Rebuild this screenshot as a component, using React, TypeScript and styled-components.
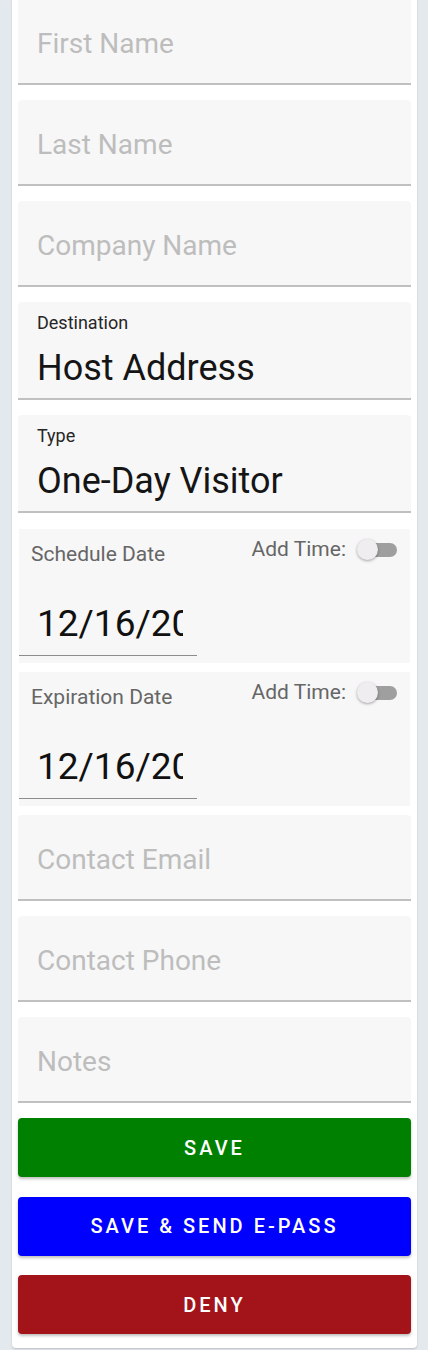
import styled, { createGlobalStyle } from "styled-components";

const GlobalStyle = createGlobalStyle`
  html, body {
    margin: 0;
    padding: 0;
    background: #e4e9ee;
    font-family: Roboto, "Liberation Sans", Arial, sans-serif;
  }
  body {
    min-height: 1350px;
  }
`;

const Card = styled.div`
  width: 405px;
  margin: -1px 0 0 12px;
  padding: 0 6px 14px;
  box-sizing: border-box;
  background: #fff;
  border-radius: 0 0 4px 4px;
  box-shadow: 0 1px 2px rgba(0, 0, 0, 0.18);
  display: flex;
  flex-direction: column;
`;

const FieldBox = styled.div<{ $gap?: number }>`
  background: #f7f7f7;
  border-radius: 4px 4px 0 0;
  border-bottom: 2px solid #c0c0c0;
  padding: 0 19px;
  margin-bottom: ${(p) => (p.$gap ?? 15)}px;
`;

const Placeholder = styled.div`
  padding: 31px 0 25px;
  font-size: 28px;
  line-height: 28px;
  color: #bdbdbd;
  white-space: nowrap;
`;

const LabelText = styled.div`
  padding-top: 12px;
  font-size: 18px;
  line-height: 18px;
  color: #262626;
`;

const ValueText = styled.div`
  margin-top: 18px;
  padding-bottom: 12px;
  font-size: 36px;
  line-height: 36px;
  color: #151515;
  white-space: nowrap;
`;

const DateBlock = styled.div`
  background: #f7f7f7;
  margin: 0 1px 9px;
  height: 134px;
  box-sizing: border-box;
  padding-bottom: 7px;
  display: flex;
  flex-direction: column;
`;

const TopRow = styled.div`
  display: flex;
  justify-content: space-between;
  align-items: flex-start;
  padding: 10px 13px 0 12px;
`;

const DateLabel = styled.div`
  margin-top: 5px;
  font-size: 21px;
  line-height: 21px;
  color: #666;
`;

const TimeToggle = styled.div`
  display: flex;
  align-items: center;
  gap: 11px;
  font-size: 21px;
  line-height: 21px;
  color: #666;
`;

const SwitchWrap = styled.div`
  position: relative;
  width: 40px;
  height: 21px;
`;

const Track = styled.div`
  position: absolute;
  right: 0;
  top: 4px;
  width: 34px;
  height: 14px;
  border-radius: 7px;
  background: #9f9f9f;
`;

const Thumb = styled.div`
  position: absolute;
  left: 0;
  top: 0;
  width: 21px;
  height: 21px;
  border-radius: 50%;
  background: #f0edf0;
  box-shadow: 0 1px 3px rgba(0, 0, 0, 0.35);
`;

const DateInput = styled.div`
  margin-top: 40px;
  width: 178px;
  padding-bottom: 13px;
  border-bottom: 1px solid #8c8c8c;
`;

const DateText = styled.div`
  margin-left: 18px;
  width: 146px;
  overflow: hidden;
  white-space: nowrap;
  font-size: 37px;
  line-height: 37px;
  color: #111;
`;

const Buttons = styled.div`
  display: flex;
  flex-direction: column;
  gap: 19.5px;
`;

const ActionButton = styled.button<{ $bg: string }>`
  height: 59px;
  border: none;
  border-radius: 4px;
  background: ${(p) => p.$bg};
  color: #fff;
  font-family: Roboto, "Liberation Sans", Arial, sans-serif;
  font-weight: 500;
  font-size: 20px;
  letter-spacing: 3px;
  text-transform: uppercase;
  box-shadow: 0 2px 3px rgba(0, 0, 0, 0.25);
  cursor: pointer;
`;

function PlainField({ text, gap }: { text: string; gap?: number }) {
  return (
    <FieldBox $gap={gap}>
      <Placeholder>{text}</Placeholder>
    </FieldBox>
  );
}

function SelectField({ label, value, gap }: { label: string; value: string; gap?: number }) {
  return (
    <FieldBox $gap={gap}>
      <LabelText>{label}</LabelText>
      <ValueText>{value}</ValueText>
    </FieldBox>
  );
}

function DateField({ label }: { label: string }) {
  return (
    <DateBlock>
      <TopRow>
        <DateLabel>{label}</DateLabel>
        <TimeToggle>
          Add Time:
          <SwitchWrap>
            <Track />
            <Thumb />
          </SwitchWrap>
        </TimeToggle>
      </TopRow>
      <DateInput>
        <DateText>12/16/2023</DateText>
      </DateInput>
    </DateBlock>
  );
}

export default function App() {
  return (
    <>
      <GlobalStyle />
      <Card>
        <PlainField text="First Name" />
        <PlainField text="Last Name" />
        <PlainField text="Company Name" />
        <SelectField label="Destination" value="Host Address" />
        <SelectField label="Type" value="One-Day Visitor" gap={16} />
        <DateField label="Schedule Date" />
        <DateField label="Expiration Date" />
        <PlainField text="Contact Email" />
        <PlainField text="Contact Phone" />
        <PlainField text="Notes" />
        <Buttons>
          <ActionButton $bg="#008000">Save</ActionButton>
          <ActionButton $bg="#0000ff">Save &amp; Send E-Pass</ActionButton>
          <ActionButton $bg="#a3141a">Deny</ActionButton>
        </Buttons>
      </Card>
    </>
  );
}
